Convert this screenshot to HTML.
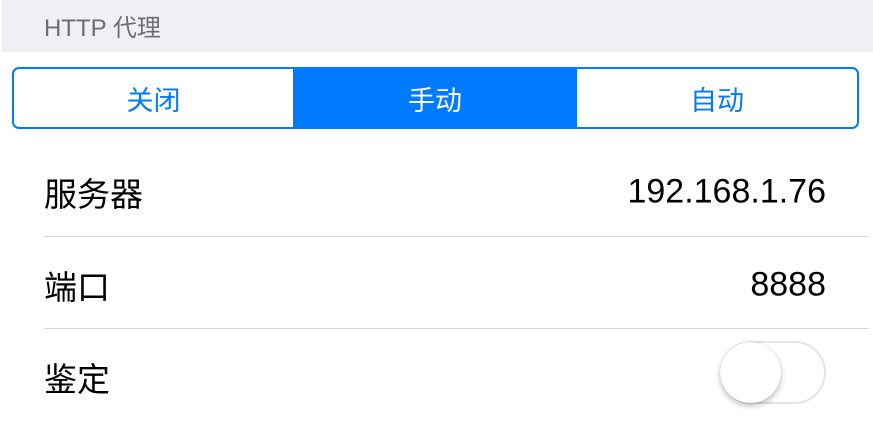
<!DOCTYPE html>
<html><head><meta charset="utf-8"><style>
*{margin:0;padding:0;box-sizing:border-box}
body{width:873px;height:412px;background:#fff;position:relative;overflow:hidden;font-family:"Liberation Sans","Noto Sans CJK SC",sans-serif}
.hdr{position:absolute;left:2px;top:0;width:871px;height:52px;background:#efeff4}
.hdr span{position:absolute;left:42px;top:8px;font-size:24px;color:#6d6d72}
.seg{position:absolute;left:12px;top:67px;width:847px;height:62px;border:2px solid #007aff;border-radius:7px;overflow:hidden;display:flex}
.seg div{flex:none;display:flex;align-items:center;justify-content:center;font-size:27px;color:#007aff}
.seg .on{background:#007aff;color:#fff}
.row{position:absolute;left:44px;right:0;height:92px}
.row .l{position:absolute;left:0;top:50%;transform:translateY(-50%);font-size:33px;color:#000}
.row .r{position:absolute;right:47px;top:50%;transform:translateY(-50%);font-size:34px;color:#000}
.sep{position:absolute;left:44px;width:825px;height:1px;background:#d8d8dc}
.tg{position:absolute;left:720px;top:341px;width:106px;height:63px;border-radius:32px;border:2px solid #e3e3e3;background:#fff}
.kn{position:absolute;left:720px;top:342px;width:61px;height:61px;border-radius:50%;background:#fff;box-shadow:0 3px 6px rgba(0,0,0,.25),0 0 1px rgba(0,0,0,.2)}
</style></head><body>
<div class="hdr"><span>HTTP 代理</span></div>
<div class="seg"><div style="width:279px">关闭</div><div class="on" style="width:284px">手动</div><div style="width:280px">自动</div></div>
<div class="row" style="top:146px"><span class="l">服务器</span><span class="r">192.168.1.76</span></div>
<div class="sep" style="top:236px"></div>
<div class="row" style="top:239px"><span class="l">端口</span><span class="r">8888</span></div>
<div class="sep" style="top:328px"></div>
<div class="row" style="top:331px"><span class="l">鉴定</span></div>
<div class="tg"></div><div class="kn"></div>
</body></html>
